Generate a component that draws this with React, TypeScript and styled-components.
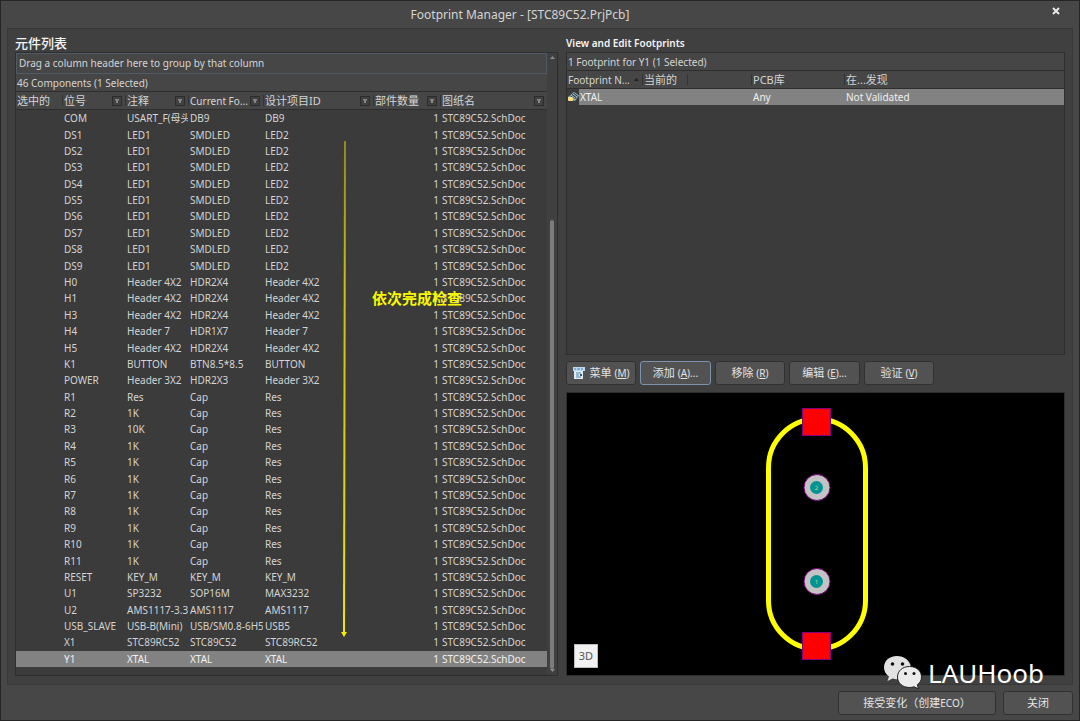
import React from 'react';
import styled, { createGlobalStyle, css } from 'styled-components';

const Global = createGlobalStyle`
  * { box-sizing: border-box; }
  html, body { margin: 0; background: #474747; }
  body, button {
    font-family: "Noto Sans", "Noto Sans CJK SC", sans-serif;
    font-size: 10px;
    line-height: 16px;
    color: #d4d4d4;
  }
`;

const Window = styled.div`
  position: relative;
  display: flex;
  flex-direction: column;
  min-height: 100vh;
  padding: 0 6px 5px;
  border: 1px solid #252525;
  background: #474747;
`;

const TitleBar = styled.header`
  position: relative;
  display: flex;
  align-items: center;
  justify-content: center;
  height: 27px;
`;

const WindowTitle = styled.h1`
  margin: 0;
  padding-right: 40px;
  font-size: 12px;
  font-weight: 400;
`;

const CloseButton = styled.button`
  position: absolute;
  top: 2px;
  right: 9px;
  display: flex;
  align-items: center;
  justify-content: center;
  width: 16px;
  height: 16px;
  padding: 0;
  border: 0;
  background: none;
`;

const Panel = styled.main`
  flex: 1;
  display: grid;
  grid-template-columns: minmax(0, 543fr) minmax(0, 499fr);
  gap: 8px;
  padding: 6px 7px 8px 7px;
  border: 1px solid #383838;
  background: #404040;
`;

const Column = styled.section`
  position: relative;
  display: flex;
  flex-direction: column;
`;

const Heading = styled.h2<{ $large?: boolean }>`
  margin: 0;
  height: 17px;
  font-size: ${(p) => (p.$large ? 13 : 10)}px;
  line-height: 16px;
  font-weight: ${(p) => (p.$large ? 500 : 600)};
  color: #f4f4f4;
  white-space: nowrap;
`;

const Frame = styled.div`
  flex: 1;
  display: flex;
  border: 1px solid #2e2e2e;
  background: #3b3b3b;
`;

const GridArea = styled.div`
  flex: 1;
  min-width: 0;
  display: flex;
  flex-direction: column;
`;

const GroupBox = styled.div`
  height: 21px;
  padding: 1px 2px;
  border: 1px solid #505b68;
  background: #464646;
`;

const Summary = styled.div`
  height: 18px;
  padding: 1px;
  border-bottom: 1px solid #2e2e2e;
  background: #464646;
`;

const Table = styled.table`
  flex: 1;
  display: flex;
  flex-direction: column;
`;

const tracks = {
  components: '46fr 63fr 63fr 75fr 110fr 67fr 107fr',
  footprints: '75fr 45fr 64fr 93fr 220fr',
};

const Head = styled.thead`
  display: block;
  border-bottom: 1px solid #2e2e2e;
  background: #464646;
`;

const Body = styled.tbody<{ $fill?: boolean }>`
  display: grid;
  ${(p) => p.$fill && css`flex: 1; grid-auto-rows: 1fr; margin-bottom: 8px;`}
`;

const Row = styled.tr<{ $kind: keyof typeof tracks; $selected?: boolean }>`
  display: grid;
  grid-template-columns: ${(p) => tracks[p.$kind]};
  align-items: center;
  ${(p) => p.$selected && css`background: #828282; color: #f0f0f0;`}
`;

const HeadCell = styled.th<{ $latin?: boolean }>`
  display: flex;
  align-items: center;
  justify-content: space-between;
  min-width: 0;
  height: 17px;
  padding: 0 3px 0 1px;
  font-size: ${(p) => (p.$latin ? 10 : 11)}px;
  font-weight: 400;
  white-space: nowrap;
  &:not(:first-child) {
    background: linear-gradient(#333, #333) left center / 1px 11px no-repeat;
    padding-left: 2px;
  }
`;

const Cell = styled.td<{ $right?: boolean }>`
  min-width: 0;
  padding: ${(p) => (p.$right ? '0 1px 0 0' : '0 0 0 2px')};
  text-align: ${(p) => (p.$right ? 'right' : 'left')};
  line-height: 16px;
  overflow: hidden;
  white-space: nowrap;
`;

const IconCell = styled(Cell)`
  display: flex;
  align-items: center;
  gap: 1px;
  height: 16px;
  padding: 0;
  background: linear-gradient(90deg, #3b3b3b 12px, #828282 12px);
`;

const FilterButton = styled.button`
  display: flex;
  align-items: center;
  justify-content: center;
  width: 10px;
  height: 10px;
  padding: 0;
  border: 1px solid #2c2c2c;
  background: #404040;
`;

const ScrollTrack = styled.div`
  display: flex;
  flex-direction: column;
  align-items: center;
  justify-content: space-between;
  width: 10px;
  padding: 3px 0;
  background: #404040;
`;

const ScrollRail = styled.div`
  flex: 1;
  display: grid;
  grid-template-rows: 160fr 445fr;
  width: 4px;
`;

const ScrollThumb = styled.div`
  grid-row: 2;
  border-radius: 2px;
  background: #7c7c7c;
`;

const Arrow = styled.svg`
  position: absolute;
  left: 322px;
  top: 106px;
  width: 14px;
  height: 497px;
  pointer-events: none;
`;

const Note = styled.p`
  position: absolute;
  left: 357px;
  top: 253px;
  margin: 0;
  font-family: "Noto Sans CJK SC", sans-serif;
  font-size: 15px;
  line-height: 20px;
  font-weight: 700;
  color: #f8f800;
`;

const Toolbar = styled.div`
  display: flex;
  gap: 4px;
  padding: 6px 0 7px;
`;

const Button = styled.button<{ $width: number; $focus?: boolean }>`
  display: flex;
  align-items: center;
  justify-content: center;
  gap: 4px;
  width: ${(p) => p.$width}px;
  height: 24px;
  padding: 0;
  border: 1px solid ${(p) => (p.$focus ? '#7b93ad' : '#313131')};
  border-radius: 3px;
  background: #525252;
  font-size: 11px;
  color: #e4e4e4;
  white-space: nowrap;
`;

const Latin = styled.span`
  font-size: 10px;
`;

const Preview = styled.div`
  position: relative;
  display: flex;
  justify-content: center;
  height: 284px;
  border: 1px solid #2e2e2e;
  background: #000;
`;

const ViewButton = styled.button`
  position: absolute;
  left: 7px;
  bottom: 7px;
  width: 24px;
  height: 24px;
  padding: 0;
  border: 1px solid #bbb;
  background: #f2f2f2;
  font-size: 11px;
  color: #555;
`;

const Footer = styled.footer`
  display: flex;
  justify-content: flex-end;
  gap: 7px;
  padding-top: 6px;
`;

const Watermark = styled.div`
  position: absolute;
  right: 35px;
  bottom: 29px;
  display: flex;
  align-items: center;
  gap: 5px;
  font-size: 26px;
  line-height: 32px;
  color: #fff;
`;

type Part = [string, string, string, string];

const parts: Part[] = [
  ['COM', 'USART_F(母头)', 'DB9', 'DB9'],
  ...Array.from({ length: 9 }, (_, i): Part => [`DS${i + 1}`, 'LED1', 'SMDLED', 'LED2']),
  ['H0', 'Header 4X2', 'HDR2X4', 'Header 4X2'],
  ['H1', 'Header 4X2', 'HDR2X4', 'Header 4X2'],
  ['H3', 'Header 4X2', 'HDR2X4', 'Header 4X2'],
  ['H4', 'Header 7', 'HDR1X7', 'Header 7'],
  ['H5', 'Header 4X2', 'HDR2X4', 'Header 4X2'],
  ['K1', 'BUTTON', 'BTN8.5*8.5', 'BUTTON'],
  ['POWER', 'Header 3X2', 'HDR2X3', 'Header 3X2'],
  ['R1', 'Res', 'Cap', 'Res'],
  ['R2', '1K', 'Cap', 'Res'],
  ['R3', '10K', 'Cap', 'Res'],
  ...Array.from({ length: 8 }, (_, i): Part => [`R${i + 4}`, '1K', 'Cap', 'Res']),
  ['RESET', 'KEY_M', 'KEY_M', 'KEY_M'],
  ['U1', 'SP3232', 'SOP16M', 'MAX3232'],
  ['U2', 'AMS1117-3.3', 'AMS1117', 'AMS1117'],
  ['USB_SLAVE', 'USB-B(Mini)', 'USB/SM0.8-6H5', 'USB5'],
  ['X1', 'STC89RC52', 'STC89C52', 'STC89RC52'],
  ['Y1', 'XTAL', 'XTAL', 'XTAL'],
];

const headers = ['选中的', '位号', '注释', 'Current Fo...', '设计项目ID', '部件数量', '图纸名'];

const Triangle = ({ down, color = '#8a8a8a' }: { down?: boolean; color?: string }) => (
  <svg width="5" height="3" viewBox="0 0 5 3" aria-hidden="true">
    <path d={down ? 'M0 0h5L2.5 3z' : 'M0 3h5L2.5 0z'} fill={color} />
  </svg>
);

const Filter = ({ label }: { label: string }) => (
  <FilterButton aria-label={`${label} filter`}>
    <svg width="6" height="6" viewBox="0 0 6 6" aria-hidden="true">
      <path d="M1 1h4v1L4 3v2H2V3L1 2z" fill="#858585" />
    </svg>
  </FilterButton>
);

const ComponentTable = () => (
  <Table>
    <Head>
      <Row $kind="components">
        {headers.map((h, i) => (
          <HeadCell key={h} scope="col" $latin={h.startsWith('Current')}>
            {h}
            {i > 0 && <Filter label={h} />}
          </HeadCell>
        ))}
      </Row>
    </Head>
    <Body $fill>
      {parts.map(([id, comment, footprint, item]) => (
        <Row key={id} $kind="components" $selected={id === 'Y1'}>
          <Cell />
          <Cell>{id}</Cell>
          <Cell>{comment}</Cell>
          <Cell>{footprint}</Cell>
          <Cell>{item}</Cell>
          <Cell $right>1</Cell>
          <Cell>STC89C52.SchDoc</Cell>
        </Row>
      ))}
    </Body>
  </Table>
);

const FootprintIcon = () => (
  <svg width="12" height="12" viewBox="0 0 12 12" aria-hidden="true">
    <path d="M1 6l6-5 5 3.500-4 5.500-6-2z" fill="#8fb0bf" />
    <path d="M3 5l4-3 4 3-3 3z" fill="#2d4650" />
    <path d="M4 4l4 3M6 3l4 3" stroke="#a9c4cf" />
    <rect x="1" y="6" width="5" height="4" rx="1" fill="#ffe07a" />
  </svg>
);

const MenuIcon = () => (
  <svg width="13" height="13" viewBox="0 0 13 13" aria-hidden="true">
    <path d="M0 0h12v4H0z" fill="#b9dcf5" />
    <path d="M1 2h2M4 2h3M8 2h2" stroke="#4a7fae" />
    <path d="M1 4h9v8H1z" fill="#dcebf5" />
    <path d="M3 6h5M3 8h3M3 10h5" stroke="#5585aa" />
    <path d="M7 7h2v2H7z" fill="#365a78" />
  </svg>
);

const FootprintDrawing = () => (
  <svg width="110" height="282" viewBox="760 393 110 282" role="img" aria-label="XTAL">
    <rect x="767.5" y="419" width="97" height="230" rx="48.5" fill="none" stroke="#ff0" strokeWidth="5" />
    {[408.5, 632.5].map((y) => (
      <rect key={y} x="801.5" y={y} width="28" height="27" fill="#f00" stroke="#800080" />
    ))}
    {[[487.5, '2'], [581.5, '1']].map(([y, n]) => (
      <g key={n}>
        <circle cx="816" cy={y} r="13" fill="#c3c3c3" stroke="#800080" />
        <circle cx="815.5" cy={y} r="6.5" fill="#009494" />
        <text x="815.5" y={Number(y) + 2} fontSize="6" textAnchor="middle" fill="#c8d890">{n}</text>
      </g>
    ))}
  </svg>
);

const ChatLogo = () => (
  <svg width="40" height="36" viewBox="0 0 40 36" aria-hidden="true">
    <path d="M14 1C6 1 1 6 1 12.500c0 4 2 7 5 9L4.500 26l5-2.500c1.500.5 3 .7 5 .7L28 12C27 5.500 21 1 14 1z" fill="#e2e2e2" />
    <path d="M26.500 11.500c-7 0-12 4.500-12 10.500s5 10.500 12 10.500c1.500 0 3-.2 4.500-.7l4.500 2-1.200-4c2.700-2 4.200-4.500 4.200-7.800 0-6-5-10.500-12-10.500z" fill="#ebebeb" stroke="#222" strokeWidth="1" />
    <circle cx="9.500" cy="9" r="1.800" fill="#111" />
    <circle cx="19.500" cy="9" r="1.800" fill="#111" />
    <circle cx="22.500" cy="18.500" r="1.500" fill="#111" />
    <circle cx="31" cy="18.500" r="1.500" fill="#111" />
  </svg>
);

const actions = [
  { text: '菜单', mnemonic: 'M', icon: true, width: 70 },
  { text: '添加', mnemonic: 'A', tail: '...', focus: true, width: 71 },
  { text: '移除', mnemonic: 'R', width: 70 },
  { text: '编辑', mnemonic: 'E', tail: '...', width: 71 },
  { text: '验证', mnemonic: 'V', width: 70 },
];

export default function App() {
  return (
    <Window>
      <Global />
      <TitleBar>
        <WindowTitle>Footprint Manager - [STC89C52.PrjPcb]</WindowTitle>
        <CloseButton aria-label="Close">
          <svg width="8" height="8" viewBox="0 0 8 8" aria-hidden="true">
            <path d="M1 1l6 6M7 1L1 7" stroke="#e8e8e8" strokeWidth="2" />
          </svg>
        </CloseButton>
      </TitleBar>
      <Panel>
        <Column>
          <Heading $large>元件列表</Heading>
          <Frame>
            <GridArea>
              <GroupBox>Drag a column header here to group by that column</GroupBox>
              <Summary>46 Components (1 Selected)</Summary>
              <ComponentTable />
            </GridArea>
            <ScrollTrack>
              <Triangle />
              <ScrollRail><ScrollThumb /></ScrollRail>
              <Triangle down />
            </ScrollTrack>
          </Frame>
          <Arrow viewBox="0 0 14 497" aria-hidden="true">
            <defs>
              <linearGradient id="fade" x1="0" y1="0" x2="0" y2="1">
                <stop offset="0" stopColor="#8f8a1a" />
                <stop offset="0.3" stopColor="#c8c010" />
                <stop offset="1" stopColor="#f0e800" />
              </linearGradient>
            </defs>
            <path d="M7 0h2l-1 492H6z" fill="url(#fade)" />
            <path d="M4 491h6l-3 5z" fill="#f5ee00" />
          </Arrow>
          <Note>依次完成检查</Note>
        </Column>
        <Column>
          <Heading>View and Edit Footprints</Heading>
          <Frame>
            <GridArea>
              <Summary>1 Footprint for Y1 (1 Selected)</Summary>
              <Table>
                <Head>
                  <Row $kind="footprints">
                    <HeadCell scope="col" $latin>Footprint N...<Triangle color="#222" /></HeadCell>
                    <HeadCell scope="col">当前的</HeadCell>
                    <HeadCell scope="col" />
                    <HeadCell scope="col">PCB库</HeadCell>
                    <HeadCell scope="col">在...发现</HeadCell>
                  </Row>
                </Head>
                <Body>
                  <Row $kind="footprints" $selected>
                    <IconCell><FootprintIcon />XTAL</IconCell>
                    <Cell />
                    <Cell />
                    <Cell>Any</Cell>
                    <Cell>Not Validated</Cell>
                  </Row>
                </Body>
              </Table>
            </GridArea>
          </Frame>
          <Toolbar>
            {actions.map((a) => (
              <Button key={a.mnemonic} $width={a.width} $focus={a.focus}>
                {a.icon && <MenuIcon />}
                <span>{a.text} <Latin>(<u>{a.mnemonic}</u>){a.tail}</Latin></span>
              </Button>
            ))}
          </Toolbar>
          <Preview>
            <FootprintDrawing />
            <ViewButton>3D</ViewButton>
          </Preview>
        </Column>
      </Panel>
      <Footer>
        <Button $width={158}><span>接受变化（创建<Latin>ECO</Latin>）</span></Button>
        <Button $width={70}>关闭</Button>
      </Footer>
      <Watermark><ChatLogo />LAUHoob</Watermark>
    </Window>
  );
}
